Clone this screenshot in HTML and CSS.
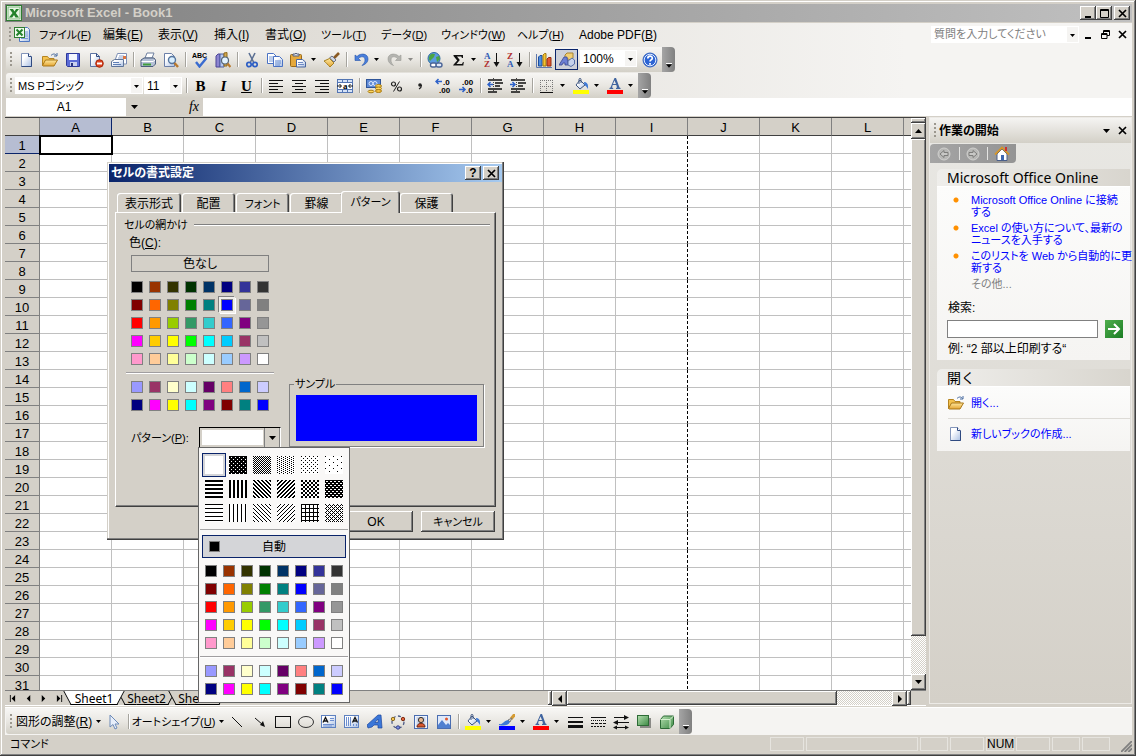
FILE: index.html
```html
<!DOCTYPE html>
<html lang="ja">
<head>
  <meta charset="UTF-8" />
  <meta name="viewport" content="width=device-width, initial-scale=1.0" />
  <title>Microsoft Excel - Book1</title>
  <link rel="stylesheet" href="styles.css">
</head>

<body>
  <!-- icon sprite -->
  <svg class="sprite" aria-hidden="true">
    <defs>
      <linearGradient id="paper" x1="0" y1="0" x2="1" y2="1"><stop offset=".3" stop-color="#fff"/><stop offset="1" stop-color="#a9bfe3"/></linearGradient>
      <linearGradient id="gold" x1="0" y1="0" x2="0" y2="1"><stop offset="0" stop-color="#ffe9a0"/><stop offset="1" stop-color="#e3a431"/></linearGradient>
      <linearGradient id="blue" x1="0" y1="0" x2="1" y2="1"><stop offset="0" stop-color="#7fb0f5"/><stop offset="1" stop-color="#1e4bb5"/></linearGradient>
      <linearGradient id="green" x1="0" y1="0" x2="1" y2="1"><stop offset="0" stop-color="#b5dfb0"/><stop offset="1" stop-color="#3d8b45"/></linearGradient>
    </defs>
    <symbol id="i-excel" viewBox="0 0 16 16"><rect x=".5" y=".5" width="15" height="15" fill="#fff" stroke="#2f7d32"/><rect x="2" y="2" width="12" height="12" fill="#e8f5e4" stroke="#7db87a"/><path d="M3.500 4H7l1.500 2.500L10 4h3L9.800 8l3.200 4.500H9.500L8 9.900l-1.800 2.600H3L6.500 8z" fill="#23822b"/></symbol>
    <symbol id="i-book" viewBox="0 0 16 16"><path d="M5.500 1.500h8l2 2v12h-10z" fill="url(#paper)" stroke="#4f77c0"/><path d="M10 6h4M10 8h4M10 10h4M7 12.500h7" stroke="#7b9bd6"/><rect x=".5" y="1.500" width="10" height="10" fill="#f0faee" stroke="#2f7d32"/><path d="M2.500 3.500l6 6M8.500 3.500l-6 6" stroke="#23822b" stroke-width="2"/></symbol>
    <symbol id="i-new" viewBox="0 0 16 16"><path d="M2.500 1.500h7l3 3v10h-10z" fill="url(#paper)" stroke="#8395ba"/><path d="M9.500 1.500v3h3" fill="#fff" stroke="#2f4a80"/><path d="M12.500 5v9.500h-10" fill="none" stroke="#2f4a80"/></symbol>
    <symbol id="i-open" viewBox="0 0 16 16"><path d="M.5 13.500v-9h5l1.500 2h5v2" fill="#f4c24e" stroke="#b58420"/><path d="M.5 13.500l3-5.500h12l-3.500 6H1z" fill="url(#gold)" stroke="#a87718"/><path d="M9 3.500c2-2 4-2 5.500 0M15 1v3h-3" fill="none" stroke="#44689f"/></symbol>
    <symbol id="i-save" viewBox="0 0 16 16"><path d="M1.500 1.500h13v13h-12l-1-1z" fill="#5b6bd6" stroke="#2e3a9b"/><rect x="4" y="2" width="8" height="6" fill="#f4f7ff"/><rect x="5" y="10" width="7" height="4" fill="#c9d0ee"/><rect x="6" y="11" width="2" height="3" fill="#28337e"/></symbol>
    <symbol id="i-perm" viewBox="0 0 16 16"><path d="M2.500 1.500h6l3 3v10h-9z" fill="url(#paper)" stroke="#5e74a3"/><path d="M8.500 1.500v3h3" fill="none" stroke="#2f4a80"/><circle cx="11.500" cy="11.500" r="3.800" fill="#dc4320" stroke="#a82708"/><path d="M9 11.500h5" stroke="#fff" stroke-width="2"/></symbol>
    <symbol id="i-mail" viewBox="0 0 16 16"><path d="M4.500 7l2-5.500h9V12H13" fill="#fff" stroke="#7d8fb5"/><path d="M8 4h5M7 6h6" stroke="#8ba3cf"/><path d="M.5 9.500l3-2h9v7H.5z" fill="url(#paper)" stroke="#5f7599"/><path d="M2 10.500h6M2 12.500h8" stroke="#5f7fb5"/><rect x="12" y="4" width="3" height="3" fill="#dd7540"/></symbol>
    <symbol id="i-print" viewBox="0 0 16 16"><path d="M5 6l2-5h7l-2 5z" fill="#fff" stroke="#6d7f9f"/><path d="M1 8l3-2h10l1.500 2v4l-2.500 2.500H1z" fill="#b5c1d6" stroke="#4a5c7d"/><path d="M1.500 9.500h11.500L15 8" fill="none" stroke="#fff"/><path d="M3 12.500h8" stroke="#3f9c3c" stroke-width="2"/></symbol>
    <symbol id="i-preview" viewBox="0 0 16 16"><path d="M1.500 1.500h7l3 3v10h-10z" fill="url(#paper)" stroke="#6b7fa8"/><circle cx="9" cy="8" r="3.500" fill="#d9efff" stroke="#55759e" stroke-width="1.400"/><path d="M11.500 11l3.500 4" stroke="#b9792e" stroke-width="2.400"/></symbol>
    <symbol id="i-research" viewBox="0 0 16 16"><path d="M1 4l2-2h2v13H1z" fill="#8c84d0" stroke="#4d4596"/><path d="M5 2h4v13H5z" fill="#b7c8f0" stroke="#4d5ea0"/><path d="M9 1l3-.5V14H9z" fill="#d4a94e" stroke="#8f6a1e"/><circle cx="10" cy="8.500" r="3.500" fill="#e2f2ff" stroke="#567" stroke-width="1.200"/><path d="M12.500 11.500l3 3.500" stroke="#b9792e" stroke-width="2.200"/></symbol>
    <symbol id="i-cut" viewBox="0 0 16 16"><path d="M5 1l4.500 9M11 1L6.500 10" stroke="#5c7093" stroke-width="1.600"/><circle cx="5" cy="12.500" r="2.200" fill="none" stroke="#2e5fc4" stroke-width="1.700"/><circle cx="11" cy="12.500" r="2.200" fill="none" stroke="#2e5fc4" stroke-width="1.700"/></symbol>
    <symbol id="i-copy" viewBox="0 0 16 16"><path d="M.5 1.500h6l3 3v7h-9z" fill="#fff" stroke="#4a72c4"/><path d="M2 5h5M2 7h5M2 9h5" stroke="#7b9bd6"/><path d="M6.500 4.500h6l3 3v7h-9z" fill="url(#paper)" stroke="#4a72c4"/><path d="M8 9h6M8 11h6M8 13h5" stroke="#5f86cf"/></symbol>
    <symbol id="i-paste" viewBox="0 0 16 16"><rect x=".5" y="2.500" width="11" height="12" rx="1" fill="#e6a93c" stroke="#9a6a18"/><path d="M3 4V2h2l1-1 1 1h2v2z" fill="#d5dbe8" stroke="#58627c"/><path d="M6.500 7.500h6l3 2.500v5h-9z" fill="url(#paper)" stroke="#4a66a0"/><path d="M8 10.500h5M8 12.500h6" stroke="#6f8bc6"/></symbol>
    <symbol id="i-brush" viewBox="0 0 16 16"><path d="M15 1l-5 5" stroke="#8a5a23" stroke-width="2.600"/><path d="M8 4l4 4-2 2-4.500-4z" fill="#cfd6e2" stroke="#6b7388"/><path d="M5.500 6.500L10 11l-4 4C4 13 2 10.500 0 9z" fill="url(#gold)" stroke="#a58125"/></symbol>
    <symbol id="i-undo" viewBox="0 0 16 16"><path d="M2 3v5.500h5.500L5.500 6.500C8 4 12 4 12 8c0 2.500-1.500 4-3 5.500 4-1 6-4 6-6.500 0-5.500-7-6.500-11-2.500z" fill="#4a7fdc" stroke="#2453a8" stroke-width=".6"/></symbol>
    <symbol id="i-redo" viewBox="0 0 16 16"><path d="M14 3v5.500H8.500l2-2C8 4 4 4 4 8c0 2.500 1 4 2.500 5.500C3 12.500 1 9.500 1 7c0-5.500 7-6.500 11-2.500z" fill="#b4b4b0" stroke="#9a9a96" stroke-width=".6"/></symbol>
    <symbol id="i-link" viewBox="0 0 16 16"><circle cx="7" cy="6.500" r="6" fill="#5b9be0" stroke="#2d6a9f"/><path d="M3 3c2-2 4-1 5-1l-1 3-2 2-2 2c-2-2-1-4 0-6zM9 5l3-1 1 3-3 3z" fill="#4aa543"/><rect x="3.500" y="11" width="6" height="4" rx="2" fill="#fff" stroke="#4b6597" stroke-width="1.400"/><rect x="9" y="11" width="6" height="4" rx="2" fill="#dfe8f8" stroke="#4b6597" stroke-width="1.400"/></symbol>
    <symbol id="i-sum" viewBox="0 0 16 16"><path d="M3.500 3h9.500v3h-1l-.8-1.500H7L9.800 8l-3.300 4H12l1-2h.8l-.5 3.500H3.200V13l4-4.500L3.500 4z" fill="#111"/></symbol>
    <symbol id="i-chart" viewBox="0 0 16 16"><path d="M.5 2v13.500H16" fill="none" stroke="#5d77ad"/><path d="M2.500 14V5L4 3.500h2V14z" fill="#4d8fe0" stroke="#204e9c"/><path d="M7 14V3l1.500-1.500H10V14z" fill="#f6c330" stroke="#a07a12"/><path d="M11 14V7l1.500-1.500H15V14z" fill="#e2562e" stroke="#912c10"/></symbol>
    <symbol id="i-draw" viewBox="0 0 16 16"><path d="M6 6V3l2-2h6v5l-2 2z" fill="#f2cf72" stroke="#a98430"/><path d="M0 13L5 5h3l1 8H6v-2H4l-1 2z" fill="#6c7fd4" stroke="#3a4691" stroke-width=".8"/><path d="M9 9l4-3 2.500 2v4L12 14.500 9 13z" fill="#c6d2ec" stroke="#556da6"/></symbol>
    <symbol id="i-help" viewBox="0 0 16 16"><circle cx="8" cy="8" r="7" fill="#2c64d4" stroke="#3462bd"/><circle cx="8" cy="8" r="5.800" fill="none" stroke="#e1ecff"/><path d="M5.800 6.500c0-3 4.500-3 4.500-.3C10.300 8 8 7.800 8 9.500M8 11v1.800" fill="none" stroke="#fff" stroke-width="1.700"/></symbol>
    <symbol id="i-left" viewBox="0 0 16 16"><path d="M1 2.500h14M1 5.500h9M1 8.500h14M1 11.500h9M1 14.500h14" stroke="#111"/></symbol>
    <symbol id="i-center" viewBox="0 0 16 16"><path d="M1 2.500h14M4 5.500h8M1 8.500h14M4 11.500h8M1 14.500h14" stroke="#111"/></symbol>
    <symbol id="i-right" viewBox="0 0 16 16"><path d="M1 2.500h14M6 5.500h9M1 8.500h14M6 11.500h9M1 14.500h14" stroke="#111"/></symbol>
    <symbol id="i-money" viewBox="0 0 16 16"><rect x=".5" y="1.500" width="14" height="8" fill="#5f8ad6" stroke="#2f5599"/><circle cx="5" cy="5.500" r="2" fill="none" stroke="#dfeaff"/><circle cx="9" cy="5.500" r="2" fill="none" stroke="#dfeaff"/><ellipse cx="12.500" cy="8" rx="3" ry="1.500" fill="#ffd75e" stroke="#a97c14"/><ellipse cx="12.500" cy="10.500" rx="3" ry="1.500" fill="#ffd75e" stroke="#a97c14"/><ellipse cx="12.500" cy="13" rx="3" ry="1.500" fill="#f5be3d" stroke="#a97c14"/><ellipse cx="5" cy="13.500" rx="3" ry="1.300" fill="#ffd75e" stroke="#a97c14"/></symbol>
    <symbol id="i-percent" viewBox="0 0 16 16"><circle cx="4.500" cy="6" r="2" fill="none" stroke="#222" stroke-width="1.200"/><circle cx="10.500" cy="11" r="2" fill="none" stroke="#222" stroke-width="1.200"/><path d="M10.500 3.500l-6 10" stroke="#222"/></symbol>
    <symbol id="i-comma" viewBox="0 0 16 16"><circle cx="8" cy="7" r="1.800" fill="#222"/><path d="M9.500 7c0 2-.5 3-2.500 4" fill="none" stroke="#222" stroke-width="1.200"/></symbol>
    <symbol id="i-outdent" viewBox="0 0 16 16"><path d="M1 2h14M8 5h8M8 8h5M1 11h14M1 14h9" stroke="#111" stroke-width="1.400"/><path d="M6 6.500H1M3.500 4L1 6.500 3.500 9" fill="none" stroke="#2e62c9" stroke-width="1.500"/><path d="M6.500 0v15" stroke="#444" stroke-dasharray="1 1"/></symbol>
    <symbol id="i-indent" viewBox="0 0 16 16"><path d="M1 2h14M8 5h8M8 8h5M1 11h14M1 14h9" stroke="#111" stroke-width="1.400"/><path d="M0 6.500h5M2.500 4L5 6.500 2.500 9" fill="none" stroke="#2e62c9" stroke-width="1.500"/><path d="M6.500 0v15" stroke="#444" stroke-dasharray="1 1"/></symbol>
    <symbol id="i-border" viewBox="0 0 16 16"><path d="M1 2.500h13M1 8.500h13M1.500 2v12M7.500 2v12M13.500 2v12" stroke="#777" stroke-dasharray="1 1"/><path d="M1 14.500h13" stroke="#111"/></symbol>
    <symbol id="i-fill" viewBox="0 0 16 16"><path d="M7 2l5 5-5 4-4-4z" fill="url(#paper)" stroke="#3d557f"/><path d="M6 6V1.500c0-1.500 2-1.500 2 0V5" fill="none" stroke="#3d557f"/><path d="M11 4c3 0 4.500 2 4 7-1-1-1.500-3-3.500-4z" fill="#3e79d6"/><rect y="12" width="16" height="4" fill="#ff0"/></symbol>
    <symbol id="i-fontcolor" viewBox="0 0 16 16"><path d="M7.500 0h1.500l3.500 9.500 1 .5v1H9v-1l1-.5L9.300 7H5.700L5 9.500l1.200.5v1H2.500v-1l1-.5zM7.500 2.500L6 6h3z" fill="#40649f"/><rect y="12" width="16" height="4" fill="red"/></symbol>
    <symbol id="i-linecolor" viewBox="0 0 16 16"><path d="M16 0l-4 5" stroke="#d59b32" stroke-width="3"/><path d="M13 4l-2 4-2-2z" fill="#ddd" stroke="#777"/><path d="M0 10c4 1 4-3 9-4l2 2c-2 4-7 4-11 3z" fill="#3e79d6"/><rect y="12" width="16" height="4" fill="#00f"/></symbol>
    <symbol id="i-cursor" viewBox="0 0 16 16"><path d="M4 1v12l3-2.500L9 15l2-1-2-4h4z" fill="#e7eefa" stroke="#6d8ab8"/></symbol>
    <symbol id="i-line" viewBox="0 0 16 16"><path d="M3 3l10 10" stroke="#111"/></symbol>
    <symbol id="i-arrow" viewBox="0 0 16 16"><path d="M3 4l8 7" stroke="#111"/><path d="M13 13L8 11l3-4z" fill="#111"/></symbol>
    <symbol id="i-rect" viewBox="0 0 16 16"><rect x=".5" y="2.500" width="15" height="11" fill="none" stroke="#111"/></symbol>
    <symbol id="i-ellipse" viewBox="0 0 16 16"><ellipse cx="8" cy="8" rx="7.500" ry="5.500" fill="none" stroke="#333"/></symbol>
    <symbol id="i-textbox" viewBox="0 0 16 16"><rect x=".5" y="1.500" width="14" height="12" fill="url(#paper)" stroke="#5e81c0"/><path d="M2 8.500l2.500-5L7 8.500M3 7h3" fill="none" stroke="#111" stroke-width="1.300"/><path d="M9 4.500h4M9 6.500h4M2 10.500h11M2 12h9" stroke="#6d8fd0"/></symbol>
    <symbol id="i-vtext" viewBox="0 0 16 16"><rect x=".5" y="1.500" width="14" height="12" fill="url(#paper)" stroke="#5e81c0"/><path d="M8.500 8.500L11 3.500l2.500 5M9.500 7h3" fill="none" stroke="#111" stroke-width="1.300"/><path d="M2.500 3v9M4.500 3v9M6.500 3v9M9.500 10v2M12.500 10v2" stroke="#6d8fd0"/></symbol>
    <symbol id="i-wordart" viewBox="0 0 16 16"><path d="M0 11L11 1h3l1 13h-4v-3H7l-2 2-4 1zM8 8.500h3V5z" fill="#3a76d8" fill-rule="evenodd" stroke="#1e479d" stroke-width=".7"/></symbol>
    <symbol id="i-diagram" viewBox="0 0 16 16"><circle cx="8" cy="8" r="6" fill="none" stroke="#4c5b86" stroke-width="1.300" stroke-dasharray="3 2.500"/><circle cx="3" cy="5" r="1.700" fill="#f4c24e" stroke="#8a6a1e"/><circle cx="13" cy="5" r="1.700" fill="#e0613a" stroke="#7f2f14"/><circle cx="8" cy="13.500" r="1.700" fill="#7b8fe0" stroke="#34408c"/></symbol>
    <symbol id="i-clip" viewBox="0 0 16 16"><rect x="1.500" y="1.500" width="13" height="13" fill="#eef3fc" stroke="#4a6db0"/><rect x="3.500" y="3" width="9" height="10" fill="#c9d4ea"/><circle cx="8" cy="6" r="2.600" fill="#e5b58e" stroke="#333"/><path d="M4 13c0-5 8-5 8 0z" fill="#d8562c" stroke="#6b2410"/></symbol>
    <symbol id="i-pic" viewBox="0 0 16 16"><rect x="1.500" y="1.500" width="13" height="13" fill="#dfe9fa" stroke="#4a6db0"/><circle cx="10.500" cy="5" r="1.500" fill="#e2562e"/><path d="M2 14v-3l4-5 4 5 2-2 2 2v3z" fill="#4f7fd0"/></symbol>
    <symbol id="i-lines" viewBox="0 0 16 16"><path d="M1 3.500h15" stroke="#111"/><path d="M1 8h15" stroke="#111" stroke-width="2"/><path d="M1 12.500h15" stroke="#111" stroke-width="3"/></symbol>
    <symbol id="i-dashes" viewBox="0 0 16 16"><path d="M1 3.500h15" stroke="#111"/><path d="M1 6.500h15" stroke="#111" stroke-dasharray="1 1"/><path d="M1 9.500h15" stroke="#111" stroke-dasharray="3 1"/><path d="M1 12.500h15" stroke="#111" stroke-dasharray="2 1"/></symbol>
    <symbol id="i-arrows" viewBox="0 0 16 16"><path d="M1 3.500h13M2 8.500h14M2 13.500h12" stroke="#111"/><path d="M11 1l5 2.500L11 6M5 6L0 8.500 5 11M4 11.500l-4 2 4 2M12 11.500l4 2-4 2" fill="#111"/></symbol>
    <symbol id="i-shadow" viewBox="0 0 16 16"><rect x="4" y="4" width="11" height="10" fill="#8a8a86"/><rect x="1.500" y="1.500" width="11" height="10" fill="url(#green)" stroke="#2d6b36"/></symbol>
    <symbol id="i-3d" viewBox="0 0 16 16"><path d="M1.500 5.500l3-3.500h10v8.500L11 14.500H1.500z" fill="url(#green)" stroke="#2d6b36"/><path d="M1.500 5.500H11v9M11 5.500L14.500 2" fill="none" stroke="#d6f0d0"/></symbol>
    <symbol id="i-home" viewBox="0 0 16 16"><path d="M3 8v6.500h10V8L8 3z" fill="#fff" stroke="#4a5f8a"/><path d="M1 8.500L8 1.500l7 7" fill="none" stroke="#d5962a" stroke-width="1.800"/><rect x="11" y="1" width="2" height="4" fill="#c33"/><rect x="7" y="9" width="3" height="5" fill="#3d67b0"/></symbol>
    <symbol id="i-back" viewBox="0 0 16 16"><circle cx="8" cy="8" r="6" fill="#b8b8b6" stroke="#d0d0ce"/><path d="M4 8l4-3.500v2h4v3H8v2z" fill="#c8c8c6" stroke="#7d7d7b"/></symbol>
    <symbol id="i-fwd" viewBox="0 0 16 16"><circle cx="8" cy="8" r="6" fill="#b8b8b6" stroke="#d0d0ce"/><path d="M12 8L8 4.500v2H4v3h4v2z" fill="#c8c8c6" stroke="#7d7d7b"/></symbol>
    <symbol id="i-close" viewBox="0 0 9 9"><path d="M1 1l7 7M8 1L1 8" stroke="#000" stroke-width="1.700"/></symbol>
    <symbol id="i-min" viewBox="0 0 9 9"><path d="M1 8h6" stroke="#000" stroke-width="2"/></symbol>
    <symbol id="i-max" viewBox="0 0 9 9"><path d="M.5.5h8v8h-8zM0 1.500h9" fill="none" stroke="#000"/></symbol>
    <symbol id="i-restore" viewBox="0 0 9 9"><path d="M2.500 3V.5h6v5H6M2 1.500h7M.5 3.500H6v5H.5zM0 4.500h6" fill="none" stroke="#000"/></symbol>
    <symbol id="i-down" viewBox="0 0 7 4"><path d="M0 0h7L3.500 4z"/></symbol>
    <symbol id="i-tri-up" viewBox="0 0 7 4"><path d="M0 4h7L3.500 0z"/></symbol>
    <symbol id="i-tri-left" viewBox="0 0 8 8"><path d="M6 0v8L2 4z"/></symbol>
    <symbol id="i-tri-right" viewBox="0 0 8 8"><path d="M2 0v8l4-4z"/></symbol>
    <symbol id="i-first" viewBox="0 0 8 8"><path d="M7 0v8L3 4zM1 0h1v8H1z"/></symbol>
    <symbol id="i-last" viewBox="0 0 8 8"><path d="M1 0v8l4-4zM6 0h1v8H6z"/></symbol>
  </svg>

  <header class="titlebar">
    <svg class="icon"><use href="#i-excel"/></svg>
    <h1>Microsoft Excel - Book1</h1>
    <button class="win-btn" aria-label="最小化"><svg class="glyph"><use href="#i-min"/></svg></button>
    <button class="win-btn" aria-label="最大化"><svg class="glyph"><use href="#i-max"/></svg></button>
    <button class="win-btn gap" aria-label="閉じる"><svg class="glyph"><use href="#i-close"/></svg></button>
  </header>

  <nav class="menubar">
    <span class="grip"></span>
    <svg class="icon"><use href="#i-book"/></svg>
    <div class="menus">
      <button class="kana">ファイル(<u>F</u>)</button>
      <button>編集(<u>E</u>)</button>
      <button>表示(<u>V</u>)</button>
      <button>挿入(<u>I</u>)</button>
      <button>書式(<u>O</u>)</button>
      <button class="kana">ツール(<u>T</u>)</button>
      <button class="kana">データ(<u>D</u>)</button>
      <button class="kana">ウィンドウ(<u>W</u>)</button>
      <button class="kana">ヘルプ(<u>H</u>)</button>
      <button>Adobe PDF(<u>B</u>)</button>
    </div>
    <select class="combo ask kana" aria-label="質問"><option>質問を入力してください</option></select>
    <div class="doc-btns">
      <button aria-label="最小化"><svg class="glyph"><use href="#i-min"/></svg></button>
      <button aria-label="元に戻す"><svg class="glyph"><use href="#i-restore"/></svg></button>
      <button aria-label="閉じる"><svg class="glyph"><use href="#i-close"/></svg></button>
    </div>
  </nav>

  <div class="bars">
    <div class="toolbar" data-tools="new open save perm mail | print preview | spell research | cut copy paste+ brush | undo+ redo+ | link sum+ az za | chart draw*">
      <span class="grip"></span>
      <span class="tools"></span>
      <select class="combo zoom" aria-label="ズーム"><option>100%</option></select>
      <button class="tool" aria-label="ヘルプ"><svg class="icon"><use href="#i-help"/></svg></button>
      <span class="cap"><svg class="arrow"><use href="#i-down"/></svg></span>
    </div>
    <div class="toolbar" data-tools="left center right merge | money percent comma inc dec | outdent indent | border+ fill+ fontcolor+">
      <span class="grip"></span>
      <select class="combo font kana" aria-label="フォント"><option>MS Pゴシック</option></select>
      <select class="combo size" aria-label="フォント サイズ"><option>11</option></select>
      <span class="sep"></span>
      <button class="tool letter"><b>B</b></button>
      <button class="tool letter"><i>I</i></button>
      <button class="tool letter"><u>U</u></button>
      <span class="sep"></span>
      <span class="tools"></span>
      <span class="cap"><svg class="arrow"><use href="#i-down"/></svg></span>
    </div>
  </div>

  <div class="formula">
    <input class="name-box" aria-label="名前ボックス" value="A1">
    <button class="name-drop" aria-label="名前一覧"><svg class="tri"><use href="#i-down"/></svg></button>
    <button class="fx" aria-label="関数の挿入">fx</button>
    <input class="formula-input" aria-label="数式バー">
  </div>

  <main class="workspace">
    <section class="book">
      <div class="sheet-row">
        <div class="sheet">
          <table class="grid">
            <thead><tr></tr></thead>
            <tbody></tbody>
          </table>
        </div>
        <div class="vscroll">
          <span class="split"></span>
          <button class="sbtn" aria-label="上へ"><svg class="tri"><use href="#i-tri-up"/></svg></button>
          <span class="thumb"></span>
          <span class="track"></span>
          <button class="sbtn" aria-label="下へ"><svg class="tri"><use href="#i-down"/></svg></button>
        </div>
      </div>
      <div class="tabs-row">
        <div class="tab-nav">
          <button aria-label="先頭"><svg><use href="#i-first"/></svg></button>
          <button aria-label="前へ"><svg><use href="#i-tri-left"/></svg></button>
          <button aria-label="次へ"><svg><use href="#i-tri-right"/></svg></button>
          <button aria-label="末尾"><svg><use href="#i-last"/></svg></button>
        </div>
        <div class="sheet-tabs">
          <button class="active">Sheet1</button>
          <button>Sheet2</button>
          <button>Sheet3</button>
        </div>
        <div class="hscroll">
          <span class="split"></span>
          <button class="sbtn" aria-label="左へ"><svg><use href="#i-tri-left"/></svg></button>
          <span class="thumb"></span>
          <span class="track"></span>
          <button class="sbtn" aria-label="右へ"><svg><use href="#i-tri-right"/></svg></button>
          <span class="split"></span>
        </div>
      </div>
    </section>

    <aside class="pane">
      <div class="pane-head">
        <span class="grip"></span>
        <h2>作業の開始</h2>
        <button aria-label="その他の作業ウィンドウ"><svg class="tri"><use href="#i-down"/></svg></button>
        <button aria-label="閉じる"><svg class="glyph"><use href="#i-close"/></svg></button>
      </div>
      <div class="pane-nav">
        <button aria-label="戻る"><svg class="icon"><use href="#i-back"/></svg></button>
        <button aria-label="進む"><svg class="icon"><use href="#i-fwd"/></svg></button>
        <button aria-label="ホーム"><svg class="icon"><use href="#i-home"/></svg></button>
      </div>
      <div class="card">
        <h3>Microsoft Office Online</h3>
        <div class="card-body">
          <ul class="kana">
            <li><a href="#">Microsoft Office Online に接続<br>する</a></li>
            <li><a href="#">Excel の使い方について、最新の<br>ニュースを入手する</a></li>
            <li><a href="#">このリストを Web から自動的に更<br>新する</a></li>
          </ul>
          <a class="more kana" href="#">その他...</a>
          <label for="search">検索:</label>
          <div class="search">
            <input id="search" type="text">
            <button aria-label="検索"><svg viewBox="0 0 18 18"><path d="M3 9h11M9 4l5 5-5 5" fill="none" stroke="#fff" stroke-width="2"/></svg></button>
          </div>
          <p>例: “2 部以上印刷する“</p>
        </div>
      </div>
      <div class="card">
        <h3>開く</h3>
        <div class="card-body files kana">
          <a href="#"><svg class="icon"><use href="#i-open"/></svg>開く...</a>
          <a href="#"><svg class="icon"><use href="#i-new"/></svg>新しいブックの作成...</a>
        </div>
      </div>
    </aside>
  </main>

  <div class="bars bottom">
    <div class="toolbar" data-tools="line arrow rect ellipse textbox vtext wordart diagram clip pic | fill+ linecolor+ fontcolor+ lines dashes arrows shadow 3d">
      <span class="grip"></span>
      <button class="text-tool"><span>図形の調整(<u>R</u>)</span><svg class="arrow"><use href="#i-down"/></svg></button>
      <button class="tool" aria-label="選択"><svg class="icon"><use href="#i-cursor"/></svg></button>
      <span class="sep"></span>
      <button class="text-tool shapes kana"><span>オートシェイプ(<u>U</u>)</span><svg class="arrow"><use href="#i-down"/></svg></button>
      <span class="tools"></span>
      <span class="cap"><svg class="arrow"><use href="#i-down"/></svg></span>
    </div>
  </div>

  <footer class="status">
    <span class="mode kana">コマンド</span>
    <span class="cell w34"></span>
    <span class="cell w112"></span>
    <span class="cell w28"></span>
    <span class="cell w34"></span>
    <span class="cell w28">NUM</span>
    <span class="cell w34"></span>
    <span class="cell w28"></span>
    <span class="cell w28"></span>
    <svg class="resize" viewBox="0 0 12 12"><path d="M0 12L12 0M4 12l8-8M8 12l4-4" stroke="#808080" stroke-width="2"/></svg>
  </footer>

  <!-- format cells dialog -->
  <section class="dialog" role="dialog" aria-labelledby="dlg-title">
    <div class="dlg-title">
      <h2 id="dlg-title">セルの書式設定</h2>
      <button class="win-btn" aria-label="ヘルプ"><b>?</b></button>
      <button class="win-btn gap" aria-label="閉じる"><svg class="glyph"><use href="#i-close"/></svg></button>
    </div>
    <div class="dlg-tabs">
      <button class="wide">表示形式</button>
      <button>配置</button>
      <button class="kana">フォント</button>
      <button>罫線</button>
      <button class="active kana">パターン</button>
      <button>保護</button>
    </div>
    <div class="page">
      <div class="group-title kana">セルの網かけ</div>
      <div class="page-cols">
        <div class="shade">
          <span class="color-label">色(<u>C</u>):</span>
          <button class="no-color">色なし</button>
          <div class="palette" data-selected="13"></div>
          <div class="pattern-row">
            <label class="kana" for="pattern">パターン(<u>P</u>):</label>
            <div class="pattern-field">
              <select id="pattern"><option></option></select>
              <div class="popup">
                <div class="patterns"></div>
                <button class="auto"><span></span>自動</button>
                <div class="palette"></div>
              </div>
            </div>
          </div>
        </div>
        <fieldset class="sample">
          <legend class="kana">サンプル</legend>
          <div></div>
        </fieldset>
      </div>
    </div>
    <div class="dlg-buttons">
      <button>OK</button>
      <button class="kana">キャンセル</button>
    </div>
  </section>

  <script src="script.js"></script>
</body>
</html>
```
FILE: styles.css
```css
* {
  box-sizing: border-box;
}
body {
  margin: 0;
  height: 100vh;
  padding: 4px 4px 4px 5px;
  display: flex;
  flex-direction: column;
  position: relative;
  overflow: hidden;
  background: #d4d0c8;
  box-shadow: inset -1px -1px #404040, inset 1px 1px #d4d0c8, inset -2px -2px #808080, inset 2px 2px #fff;
  font: 12px/12px "Liberation Sans", "Noto Sans CJK JP", sans-serif;
  font-feature-settings: "palt";
  color: #000;
}
button, input, select {
  font: inherit;
  font-feature-settings: inherit;
  color: inherit;
  margin: 0;
  padding: 0;
  border: 0;
  border-radius: 0;
  background: none;
}
h1, h2, h3, p, ul {
  margin: 0;
  padding: 0;
  font-size: 12px;
}
button {
  display: flex;
  align-items: center;
  justify-content: center;
  white-space: nowrap;
}
svg {
  display: block;
  flex: none;
}
.sprite {
  position: absolute;
  width: 0;
  height: 0;
}
.kana {
  font-size: 11px;
}
.icon {
  width: 16px;
  height: 16px;
}
.glyph {
  width: 9px;
  height: 9px;
}
.tri {
  width: 7px;
  height: 4px;
}
.arrow {
  width: 5px;
  height: 3px;
}
.abc {
  font: bold 7px "Liberation Sans", sans-serif;
}
.sort {
  font: bold 9px "Liberation Serif", serif;
}
.dec {
  font: bold 8px "Liberation Sans", sans-serif;
}
.blue {
  fill: #2f5cb5;
}
.red {
  fill: #b03030;
}

/* title bar */
.titlebar {
  display: flex;
  align-items: center;
  height: 18px;
  padding: 0 2px 0 1px;
  margin-bottom: 1px;
  background: linear-gradient(90deg, #808080, #c0c0c0);
}
.titlebar h1 {
  flex: 1;
  margin-left: 3px;
  font: bold 13px/16px "Liberation Sans", sans-serif;
  color: #d4d0c8;
}
.win-btn {
  width: 16px;
  height: 14px;
  background: #d4d0c8;
  box-shadow: inset -1px -1px #404040, inset 1px 1px #fff, inset -2px -2px #808080;
}
.gap {
  margin-left: 2px;
}

/* menu bar */
.menubar, .bars, .toolbar {
  display: flex;
}
.menubar {
  align-items: center;
  height: 24px;
  padding: 0 5px 2px 4px;
  background: linear-gradient(90deg, #d6d2ca, #f5f4f2 80%);
}
.grip {
  flex: none;
  width: 3px;
  height: 15px;
  margin-right: 2px;
  background: repeating-linear-gradient(#9b978e 0 2px, transparent 2px 4px) 0 0 / 2px 100% no-repeat;
}
.menus {
  flex: 1;
  display: grid;
  grid-template-columns: 64px 55px 56px 51px 56px 60px 60px 76px 62px auto;
  margin-left: 9px;
}
.menus button {
  justify-content: flex-start;
  height: 20px;
  padding-top: 2px;
}
.combo {
  appearance: none;
  height: 17px;
  padding: 0 14px 0 3px;
  background: #fff url('data:image/svg+xml,<svg xmlns="http://www.w3.org/2000/svg" width="11" height="15"><rect width="11" height="15" fill="%23f5f4f2"/><path d="M3 7h5l-2.500 3z"/></svg>') no-repeat right 1px center;
}
.ask {
  width: 148px;
  color: #808080;
}
.doc-btns {
  display: flex;
  gap: 8px;
  margin-left: 5px;
}

/* toolbars */
.bars {
  flex-direction: column;
  align-items: flex-start;
  gap: 1px;
  background: linear-gradient(90deg, #d6d2ca, #f5f4f2 80%);
}
.bottom {
  padding: 1px 0;
  margin-top: 1px;
  background: #f5f4f2;
  border-top: 1px solid #fff;
}
.toolbar {
  align-items: center;
  height: 25px;
  padding-left: 4px;
  margin-left: 1px;
  background: linear-gradient(#f7f6f4, #e9e7e2 50%, #d3d0c7);
  border-radius: 3px;
}
.tools {
  display: flex;
  align-items: center;
}
.tool {
  width: 23px;
  height: 21px;
}
.tool.drop {
  width: 34px;
  gap: 5px;
}
.tool.pressed {
  border: 1px solid #0a246a;
  background: #cdd0d8;
}
.letter {
  font: 15px/16px "Liberation Serif", serif;
}
.letter i, .letter u {
  font-weight: bold;
}
.sep {
  width: 1px;
  height: 15px;
  margin: 0 2px 0 3px;
  background: #a6a49e;
  box-shadow: 1px 0 #fff;
}
.dim {
  opacity: 0.4;
}
.zoom {
  width: 57px;
  margin: 0 1px 2px 2px;
}
.font {
  width: 128px;
  margin-right: 1px;
}
.size {
  width: 38px;
  margin-right: 1px;
}
.cap {
  width: 13px;
  height: 25px;
  margin-left: 1px;
  display: flex;
  align-items: flex-end;
  justify-content: center;
  padding-bottom: 4px;
  background: linear-gradient(90deg, #a5a5a5, #808080);
  border-radius: 0 4px 4px 0;
}
.cap .arrow {
  border-top: 1px solid #fff;
  width: 6px;
  height: 5px;
}
.text-tool {
  width: 87px;
  height: 21px;
  gap: 4px;
}
.shapes {
  width: 94px;
}

/* formula bar */
.formula {
  display: flex;
  height: 19px;
  border-bottom: 1px solid #d4d0c8;
  padding-left: 1px;
}
.name-box {
  width: 120px;
  padding-right: 4px;
  text-align: center;
  background: #fff;
}
.name-drop {
  width: 16px;
}
.fx {
  width: 61px;
  justify-content: flex-end;
  padding-right: 4px;
  font: italic 14px/16px "Liberation Serif", serif;
}
.formula-input {
  flex: 1;
  background: #fff;
}

/* workbook */
.workspace {
  flex: 1;
  min-height: 0;
  display: flex;
  gap: 3px;
}
.book {
  flex: 1;
  min-width: 0;
  display: flex;
  flex-direction: column;
  border-top: 1px solid #404040;
  border-bottom: 1px solid #fff;
}
.sheet-row {
  flex: 1;
  min-height: 0;
  display: flex;
}
.sheet {
  flex: 1;
  min-width: 0;
  overflow: hidden;
  background: #fff;
}
.grid {
  table-layout: fixed;
  width: 971px;
  border-collapse: separate;
  border-spacing: 0;
}
.grid th {
  height: 18px;
  padding: 2px 0 0;
  background: #d4d0c8;
  border: solid #808080;
  border-width: 0 1px 1px 0;
  font: 13px/15px "Liberation Sans", sans-serif;
}
.grid thead th {
  width: 72px;
  border-bottom-color: #404040;
}
.grid thead th:first-child {
  width: 35px;
}
.grid td {
  height: 18px;
  padding: 0;
  border: solid #c0c0c0;
  border-width: 0 1px 1px 0;
}
.grid .on {
  background: #b6bdd2;
  border-color: #0a246a;
}
.grid td.current {
  outline: 2px solid #000;
  outline-offset: -1px;
}
.grid .page-end {
  border-right: 1px dashed #000;
}
.vscroll, .hscroll {
  display: flex;
  background: #d4d0c8;
}
.vscroll {
  width: 15px;
  flex-direction: column;
}
.split, .sbtn, .thumb {
  flex: none;
  background: #d4d0c8;
  box-shadow: inset -1px -1px #404040, inset 1px 1px #fff, inset -2px -2px #808080;
}
.vscroll .split {
  height: 5px;
}
.hscroll .split {
  width: 4px;
}
.sbtn {
  width: 15px;
  height: 15px;
}
.vscroll .sbtn {
  height: 16px;
}
.sbtn svg {
  max-width: 8px;
  max-height: 8px;
}
.vscroll .thumb {
  flex: 499;
}
.track {
  background: repeating-conic-gradient(#fff 0 25%, #d4d0c8 0 50%) 0 0 / 2px 2px;
}
.vscroll .track {
  flex: 38;
}
.tabs-row {
  display: flex;
  height: 15px;
  border-top: 1px solid #808080;
}
.tab-nav {
  display: flex;
  width: 62px;
}
.tab-nav button {
  flex: 1;
}
.tab-nav svg {
  width: 7px;
  height: 7px;
}
.hscroll svg {
  width: 8px;
  height: 8px;
}
.sheet-tabs {
  flex: 1;
  display: flex;
}
.sheet-tabs button {
  position: relative;
  isolation: isolate;
  width: 51px;
  font: 12px/13px "Noto Sans", sans-serif;
}
.sheet-tabs button::before, .sheet-tabs button::after {
  content: "";
  position: absolute;
  z-index: -1;
  top: 0;
  bottom: 0;
  width: 60%;
  background: #d4d0c8;
  border-bottom: 1px solid #000;
}
.sheet-tabs button::before {
  left: 0;
  border-left: 1px solid #000;
  transform: skewX(28deg);
}
.sheet-tabs button::after {
  right: 0;
  border-right: 1px solid #000;
  transform: skewX(-28deg);
}
.sheet-tabs .active {
  z-index: 1;
  width: 54px;
  text-decoration: underline;
}
.sheet-tabs .active::before, .sheet-tabs .active::after {
  background: #fff;
}
.hscroll {
  width: 41%;
  padding-right: 15px;
}
.hscroll .thumb {
  flex: 265;
}
.hscroll .track {
  flex: 54;
}

/* task pane */
.pane {
  width: 203px;
  margin-bottom: 2px;
  border: 1px solid #eceae6;
  background: linear-gradient(#e9e8e4, #d4d0c8);
}
.pane-head {
  display: flex;
  align-items: center;
  height: 25px;
  padding: 0 4px;
  gap: 8px;
  background: linear-gradient(#f5f4f2, #d3d0c7);
}
.pane-head .grip {
  margin: 0 -6px 0 0;
}
.pane-head h2 {
  flex: 1;
}
.pane-nav {
  display: flex;
  width: 86px;
  height: 19px;
  margin: 1px 0 6px 0;
  background: linear-gradient(90deg, #a5a5a5, #949494);
  border-radius: 4px 0 4px 0;
}
.pane-nav button {
  flex: 1;
  position: relative;
}
.pane-nav button + button::before {
  content: "";
  position: absolute;
  left: 0;
  top: 3px;
  bottom: 3px;
  border-left: 1px solid #e4e4e2;
}
.card {
  margin: 0 1px 9px 7px;
}
.card h3 {
  height: 17px;
  padding-left: 10px;
  font: 14px/18px "Noto Sans", "Noto Sans CJK JP", sans-serif;
  background: linear-gradient(90deg, #efeeeb, #d8d5ce);
  border-radius: 5px 0 0 0;
}
.card-body {
  display: flex;
  flex-direction: column;
  padding: 7px 4px 5px 11px;
  background: linear-gradient(#fcfcfb, #f5f4f2);
  border-top: 1px solid #fff;
}
.card ul {
  list-style: none;
}
.card li {
  padding-left: 23px;
  margin-bottom: 4px;
  white-space: nowrap;
  background: radial-gradient(circle at 8px 6px, #ff9000 2px, transparent 3px);
}
.kana li {
  font-size: 11px;
}
a {
  color: #00f;
  text-decoration: none;
}
.card .more {
  margin-left: 23px;
  color: #808080;
}
.card label {
  margin-top: 12px;
}
.search {
  display: flex;
  gap: 7px;
  margin: 6px 3px 5px -1px;
}
.search input {
  flex: 1;
  min-width: 0;
  height: 18px;
  border: 1px solid #808080;
  background: #fff;
}
.search button {
  width: 18px;
  height: 18px;
  background: linear-gradient(135deg, #4fae4c, #1b7d24);
}
.search svg {
  width: 18px;
  height: 18px;
}
.files {
  padding: 0 0 2px 11px;
}
.files a {
  display: flex;
  align-items: center;
  gap: 7px;
  height: 31px;
}
.files a + a {
  border-top: 1px solid #dddbd6;
}

/* status bar */
.status {
  display: flex;
  align-items: center;
  height: 17px;
  gap: 2px;
}
.mode {
  flex: 1;
  padding-left: 5px;
}
.cell {
  height: 14px;
  border: 1px solid #e6e4df;
  text-align: center;
}
.w28 {
  width: 28px;
}
.w34 {
  width: 34px;
}
.w112 {
  width: 112px;
}
.resize {
  width: 11px;
  height: 11px;
  margin-left: 9px;
  align-self: flex-end;
}

/* dialog */
.dialog {
  position: absolute;
  left: 107px;
  top: 162px;
  width: 397px;
  padding: 2px 2px 8px;
  background: #d4d0c8;
  box-shadow: inset -1px -1px #404040, inset -2px -2px #808080, inset 1px 1px #d4d0c8, inset 2px 2px #fff;
}
.dlg-title {
  display: flex;
  align-items: center;
  height: 18px;
  padding: 0 3px 0 2px;
  background: linear-gradient(90deg, #0a246a, #a6caf0);
}
.dlg-title h2 {
  flex: 1;
  color: #fff;
}
.dlg-tabs {
  display: flex;
  align-items: flex-end;
  gap: 1px;
  margin: 9px 0 0 8px;
}
.dlg-tabs button {
  width: 53px;
  height: 19px;
  padding-top: 2px;
  box-shadow: inset 1px 1px #fff, inset -1px 0 #404040, inset -2px 0 #808080;
  border-radius: 3px 3px 0 0;
}
.dlg-tabs .wide {
  width: 64px;
}
.dlg-tabs .active {
  width: 59px;
  height: 22px;
  margin: 0 -1px -1px -3px;
  padding: 0 0 1px;
  background: #d4d0c8;
}
.page {
  height: 295px;
  margin: 0 6px;
  padding: 6px 5px 0 8px;
  border: 1px solid #fff;
  border-right-color: #404040;
  border-bottom-color: #404040;
  box-shadow: inset -1px -1px #808080;
}
.group-title {
  display: flex;
  align-items: center;
  gap: 6px;
}
.group-title::after {
  content: "";
  flex: 1;
  height: 2px;
  background: linear-gradient(#808080 50%, #fff 50%);
}
.page-cols {
  display: flex;
  gap: 8px;
  padding: 6px 6px 0 7px;
}
.shade {
  width: 150px;
}
.color-label {
  display: block;
  margin-left: -2px;
}
.no-color {
  width: 138px;
  height: 17px;
  margin: 6px 0 9px;
  border: 1px solid #808080;
}
.palette {
  display: grid;
  grid-template-columns: repeat(8, 12px);
  gap: 6px;
}
.palette button {
  width: 12px;
  height: 12px;
  border: 1px solid #808080;
}
.palette hr {
  grid-column: 1 / -1;
  height: 2px;
  margin: 1px -5px;
  border: 0;
  background: linear-gradient(#a09ea0 50%, #fff 50%);
}
.palette .selected {
  box-shadow: 0 0 0 2px #f0eeea, -1px -1px 0 2px #808080, 1px 1px 0 2px #fff;
}
.pattern-row {
  display: flex;
  align-items: center;
  margin-top: 16px;
}
.pattern-row label {
  width: 68px;
  white-space: nowrap;
}
.pattern-field {
  position: relative;
}
#pattern {
  appearance: none;
  display: block;
  width: 82px;
  height: 21px;
  border: 1px solid #000;
  border-right-color: #fff;
  background: url('data:image/svg+xml,<svg xmlns="http://www.w3.org/2000/svg" width="16" height="19"><path d="M.5 0v19M15.500 0v19" stroke="gray"/><path d="M5 8h7l-3.500 4z"/></svg>') no-repeat right center, linear-gradient(#fff, #fff) 2px 2px / 61px 15px no-repeat, #d4d0c8;
}
.popup {
  position: absolute;
  z-index: 1;
  left: -1px;
  top: 20px;
  width: 152px;
  padding: 5px 4px 7px 3px;
  background: #f9f8f7;
  border: 1px solid #666;
}
.patterns {
  display: grid;
  grid-template-columns: repeat(6, 24px);
}
.patterns button {
  width: 24px;
  height: 24px;
}
.patterns .selected {
  border: 1px solid #0a246a;
  background: #d4d5d8;
}
.auto {
  position: relative;
  width: 144px;
  height: 23px;
  margin: 10px 0 7px;
  border: 1px solid #0a246a;
  background: #d4d5d8;
}
.auto::before {
  content: "";
  position: absolute;
  left: -3px;
  right: -3px;
  top: -7px;
  border-top: 1px solid #a6a6a6;
}
.auto span {
  position: absolute;
  left: 6px;
  width: 11px;
  height: 11px;
  background: #000;
  border: 1px solid #808080;
}
.popup .palette {
  margin-left: 3px;
}
.sample {
  flex: 1;
  align-self: flex-end;
  height: 69px;
  margin: 0 0 1px;
  padding: 5px 6px 6px;
  border: 1px solid #808080;
  box-shadow: 1px 1px #fff;
}
.sample legend {
  padding: 0 1px;
  margin-left: -2px;
}
.sample div {
  height: 46px;
  background: #00f;
}
.dlg-buttons {
  display: flex;
  justify-content: flex-end;
  gap: 8px;
  margin: 4px 7px 0;
}
.dlg-buttons button {
  width: 74px;
  height: 21px;
  box-shadow: inset -1px -1px #404040, inset 1px 1px #fff, inset -2px -2px #808080;
}
```
FILE: script.js
```js
// icons that carry letters are inlined, the others come from the sprite
const letterIcons = {
  spell: '<text x="0" y="6" class="abc">ABC</text><path d="M4 10l3.500 4.500L14.500 6" fill="none" stroke="#3a6cd0" stroke-width="2.400"/>',
  az: '<text x="0" y="7" class="sort blue">A</text><text x="0" y="15" class="sort red">Z</text><path d="M12.500 1v12" stroke="#111"/><path d="M9.500 10h6l-3 5z" fill="#111"/>',
  za: '<text x="0" y="7" class="sort red">Z</text><text x="0" y="15" class="sort blue">A</text><path d="M12.500 1v12" stroke="#111"/><path d="M9.500 10h6l-3 5z" fill="#111"/>',
  merge: '<rect x=".5" y="1.500" width="15" height="13" fill="#d6e3f7" stroke="#5375b3"/><path d="M0 4.500h16M0 11.500h16M5.500 1v3M10.500 1v3M5.500 12v3M10.500 12v3" stroke="#5375b3"/><rect x="1" y="5" width="14" height="6" fill="#fff"/><path d="M0 8h4M16 8h-4M2.500 6L4.500 8l-2 2M13.500 6l-2 2 2 2" fill="none" stroke="#111"/><text x="6" y="11" class="sort">a</text>',
  inc: '<path d="M7 3.500H1M3.500 1L1 3.500 3.500 6" fill="none" stroke="#2e62c9" stroke-width="1.500"/><text x="8" y="7" class="dec">.0</text><text x="4" y="15" class="dec">.00</text>',
  dec: '<text x="4" y="7" class="dec">.00</text><path d="M1 11.500h6M4.500 9L7 11.500 4.500 14" fill="none" stroke="#2e62c9" stroke-width="1.500"/><text x="8" y="15" class="dec">.0</text>'
};

// toolbar buttons: "+" adds a drop-down arrow, "*" is pressed in, "|" is a separator
document.querySelectorAll('.toolbar').forEach(bar => {
  bar.querySelector('.tools').innerHTML = bar.dataset.tools.split(' ').map(t => {
    if (t === '|') return '<span class="sep"></span>';
    const name = t.replace(/[+*]/, '');
    const cls = t.endsWith('+') ? ' drop' : t.endsWith('*') ? ' pressed' : '';
    const dim = name === 'redo' ? ' dim' : '';
    const arrow = cls === ' drop' ? `<svg class="arrow${dim}"><use href="#i-down"/></svg>` : '';
    const shape = letterIcons[name] || `<use href="#i-${name}"/>`;
    return `<button class="tool${cls}" aria-label="${name}"><svg class="icon">${shape}</svg>${arrow}</button>`;
  }).join('');
});

// sheet grid
const letters = [...'ABCDEFGHIJKL', ''];
document.querySelector('.grid thead tr').innerHTML =
  '<th></th>' + letters.map(l => `<th class="${l === 'A' ? 'on' : ''}">${l}</th>`).join('');
let rows = '';
for (let r = 1; r <= 31; r++) {
  rows += `<tr><th class="${r === 1 ? 'on' : ''}">${r}</th>` + letters.map(l => {
    const cls = l === 'A' && r === 1 ? 'current' : l === 'I' ? 'page-end' : '';
    return `<td class="${cls}"></td>`;
  }).join('') + '</tr>';
}
document.querySelector('.grid tbody').innerHTML = rows;

// colour palettes
const colors = [
  '#000000', '#993300', '#333300', '#003300', '#003366', '#000080', '#333399', '#333333',
  '#800000', '#ff6600', '#808000', '#008000', '#008080', '#0000ff', '#666699', '#808080',
  '#ff0000', '#ff9900', '#99cc00', '#339966', '#33cccc', '#3366ff', '#800080', '#969696',
  '#ff00ff', '#ffcc00', '#ffff00', '#00ff00', '#00ffff', '#00ccff', '#993366', '#c0c0c0',
  '#ff99cc', '#ffcc99', '#ffff99', '#ccffcc', '#ccffff', '#99ccff', '#cc99ff', '#ffffff',
  '#9999ff', '#993366', '#ffffcc', '#ccffff', '#660066', '#ff8080', '#0066cc', '#ccccff',
  '#000080', '#ff00ff', '#ffff00', '#00ffff', '#800080', '#800000', '#008080', '#0000ff'
];
document.querySelectorAll('.palette').forEach(p => {
  p.innerHTML = colors.map((c, i) => {
    const sel = p.dataset.selected === String(i) ? 'selected' : '';
    return (i === 40 ? '<hr>' : '') + `<button class="${sel}" aria-label="${c}" style="background:${c}"></button>`;
  }).join('');
});

// fill patterns, one string per pixel row of the tile
const patterns = [
  ['0'],
  ['1111', '1101', '1111', '0111'],
  ['10', '01'],
  ['1000', '0010'],
  ['1000', '0000', '0010', '0000'],
  ['10000000', '00000000', '00000000', '00001000', '00000000', '00000000'],
  ['1', '1', '0', '0'],
  ['1100'],
  ['1100', '0110', '0011', '1001'],
  ['1100', '1001', '0011', '0110'],
  ['1100', '1100', '0011', '0011'],
  ['1111', '1001', '1111', '0110'],
  ['1', '0', '0', '0'],
  ['1000'],
  ['1000', '0100', '0010', '0001'],
  ['0001', '0010', '0100', '1000'],
  ['1111', '1000', '1000', '1000'],
  ['1000', '0101', '0010', '0101']
];
document.querySelector('.patterns').innerHTML = patterns.map((tile, n) => {
  let d = '';
  for (let y = 0; y < 18; y++) {
    for (let x = 0; x < 18; x++) {
      const line = tile[y % tile.length];
      if (line[x % line.length] === '1') d += `M${x} ${y}h1v1h-1z`;
    }
  }
  return `<button class="${n === 0 ? 'selected' : ''}" aria-label="パターン ${n + 1}">` +
    `<svg width="18" height="18" shape-rendering="crispEdges"><path fill="#fff" d="M0 0h18v18H0z"/><path d="${d}"/></svg></button>`;
}).join('');
```
